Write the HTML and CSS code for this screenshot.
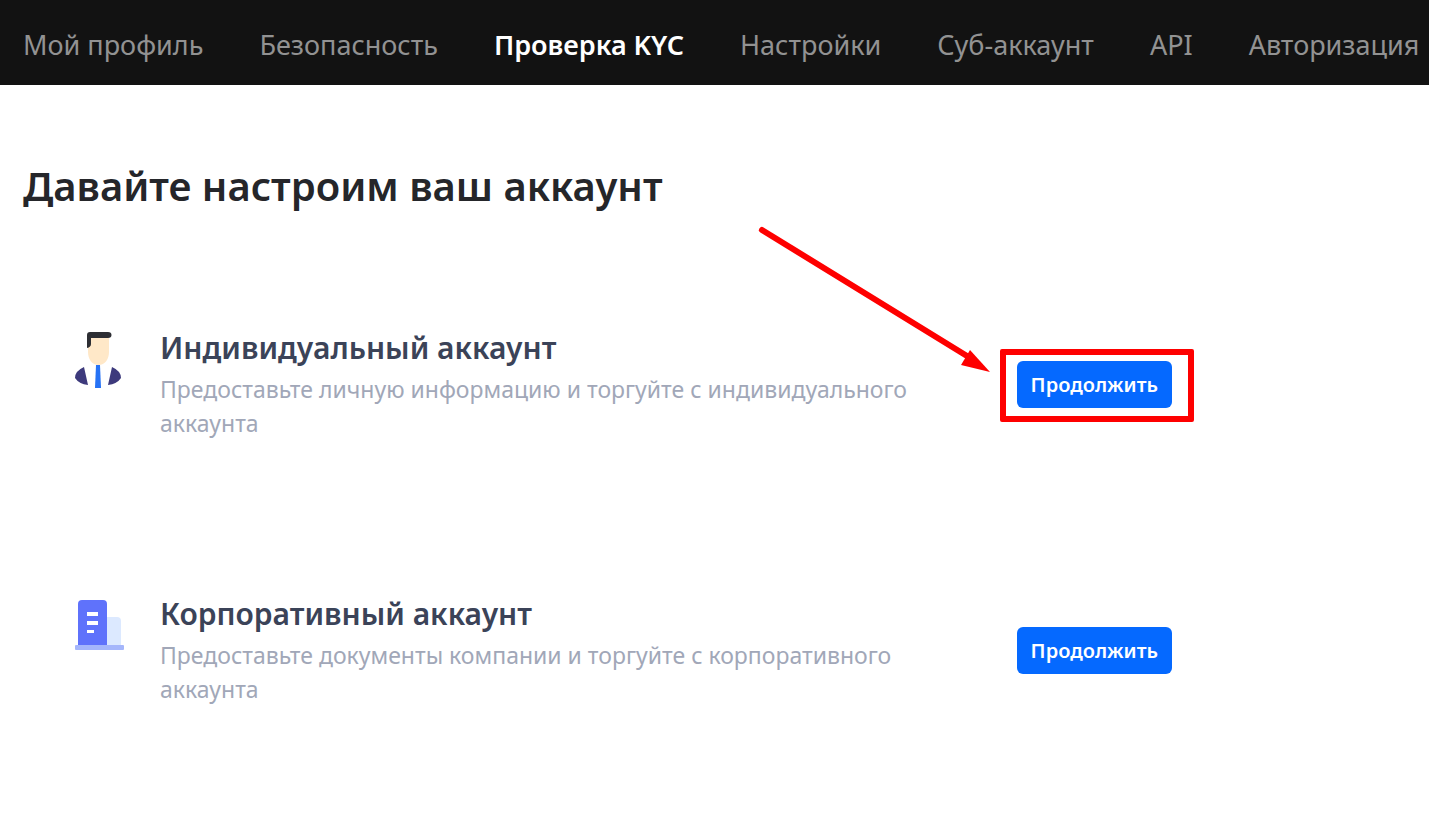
FILE: index.html
```html
<!DOCTYPE html>
<html lang="ru">
<head>
  <meta charset="UTF-8" />
  <meta name="viewport" content="width=device-width, initial-scale=1.0" />
  <title>Проверка KYC</title>
  <link rel="stylesheet" href="styles.css">
</head>
<body>

  <nav class="tabs">
    <a href="#profile">Мой профиль</a>
    <a href="#security">Безопасность</a>
    <a href="#kyc" class="active">Проверка KYC</a>
    <a href="#settings">Настройки</a>
    <a href="#sub">Суб-аккаунт</a>
    <a href="#api">API</a>
    <a href="#auth">Авторизация</a>
  </nav>

  <main class="container">
    <h1>Давайте настроим ваш аккаунт</h1>

    <!-- Individual account -->
    <section class="account">
      <svg class="account-icon" viewBox="0 0 52 64" aria-hidden="true">
        <path d="M16 9h21v15c0 7-4 13-10.500 13S16 31 16 24z" fill="#ffe8c8"/>
        <path d="M15 20V7q0-3 3-3h18q3.500 0 3.500 3t-3.500 3H19v6q0 3-4 4z" fill="#2d2e33"/>
        <path d="M12 39L16 57Q7 56 3 50q0-7 9-11zM40 39l-4 18q9-1 13-7 0-7-9-11z" fill="#3d3a7c"/>
        <path d="M24 37h4l1 23h-6z" fill="#2672f5"/>
      </svg>
      <div class="account-text">
        <h2>Индивидуальный аккаунт</h2>
        <p>Предоставьте личную информацию и торгуйте с индивидуального аккаунта</p>
      </div>
      <div class="account-action">
        <button type="button">Продолжить</button>
        <span class="highlight"></span>
        <svg class="arrow" viewBox="0 0 236 150" aria-hidden="true">
          <path d="M7 6L212 132" stroke="#fe0000" stroke-width="6" stroke-linecap="round"/>
          <path d="M235 148l-20-22-9 15z" fill="#fe0000"/>
        </svg>
      </div>
    </section>

    <!-- Corporate account -->
    <section class="account">
      <svg class="account-icon" viewBox="0 0 52 64" aria-hidden="true">
        <path d="M34 23h11q4 0 4 4v25H34z" fill="#dce9ff"/>
        <path d="M6 52V10q0-4 4-4h21q4 0 4 4v42z" fill="#5f72fb"/>
        <path d="M15 18h11v4H15zM15 27h11v4H15zM15 36h7v3h-7z" fill="#fff"/>
        <rect x="3" y="51" width="49" height="5" rx="1" fill="#a5b6fb"/>
      </svg>
      <div class="account-text">
        <h2>Корпоративный аккаунт</h2>
        <p>Предоставьте документы компании и торгуйте с корпоративного аккаунта</p>
      </div>
      <div class="account-action">
        <button type="button">Продолжить</button>
      </div>
    </section>
  </main>

</body>
</html>
```
FILE: styles.css
```css
* {
  box-sizing: border-box;
}

body {
  margin: 0;
  font-family: "Noto Sans", sans-serif;
  background: #fff;
  color: #25262a;
}

.tabs {
  display: flex;
  gap: 56px;
  padding: 26px 23px 22px;
  background-color: #121212;
  overflow: hidden;
}

.tabs a {
  color: #929292;
  font-size: 27px;
  line-height: 37px;
  text-decoration: none;
  white-space: nowrap;
}

.tabs a.active {
  color: #fff;
  font-weight: 600;
}

.container {
  padding: 71px 18% 48px 23px;
}

h1 {
  margin: 0 0 112px;
  font-size: 40px;
  line-height: 60px;
  font-weight: 600;
}

.account {
  display: flex;
  align-items: center;
  gap: 36px;
  margin-bottom: 154px;
  padding-left: 49px;
}

.account:last-child {
  margin-bottom: 0;
}

.account-icon {
  flex: none;
  align-self: flex-start;
  width: 52px;
  height: 64px;
}

.account-text {
  flex: 1;
}

.account-text h2 {
  margin: 0 0 4px;
  color: #3b4358;
  font-size: 30px;
  line-height: 40px;
  font-weight: 600;
}

.account-text p {
  margin: 0;
  color: #a1a7b8;
  font-size: 23px;
  line-height: 34px;
}

.account-action {
  position: relative;
  margin-left: 48px;
}

.account-action button {
  display: block;
  min-width: 155px;
  padding: 8px 12px;
  border: none;
  border-radius: 6px;
  background-color: #0569ff;
  color: #fff;
  font-family: inherit;
  font-size: 20px;
  line-height: 31px;
  font-weight: 600;
  cursor: pointer;
}

/* callout around the button */
.highlight {
  position: absolute;
  top: -12px;
  right: -22px;
  bottom: -14px;
  left: -17px;
  border: 6px solid #fe0000;
  border-radius: 2px;
  pointer-events: none;
}

.arrow {
  position: absolute;
  top: -137px;
  right: 181px;
  width: 236px;
  height: 150px;
  fill: none;
  pointer-events: none;
}
```
